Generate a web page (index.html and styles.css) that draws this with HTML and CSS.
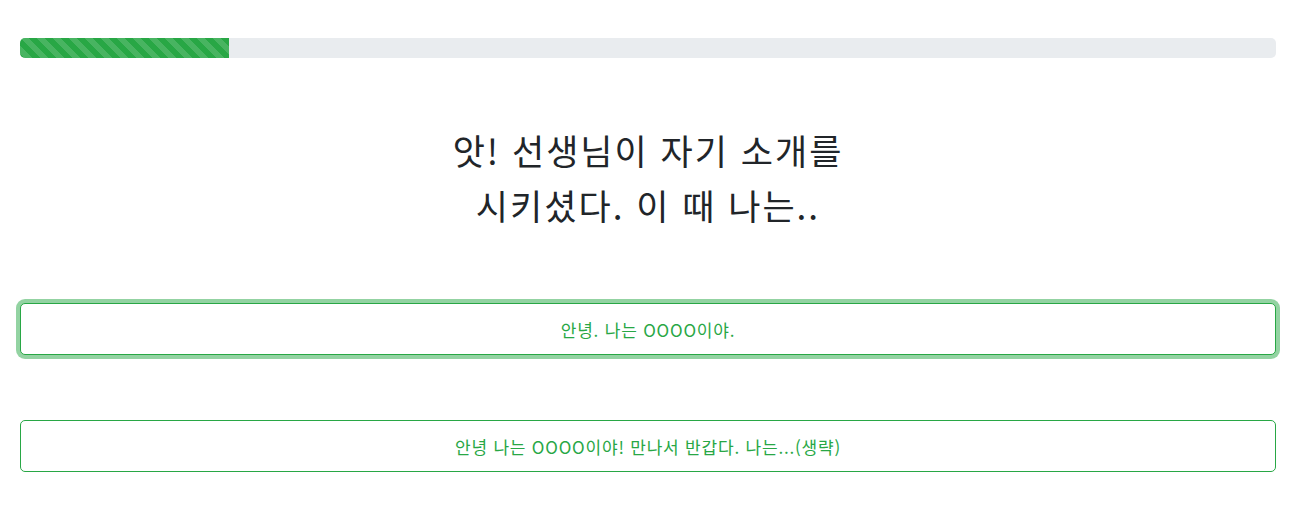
FILE: index.html
```html
<!DOCTYPE html>
<html lang="ko">
<head>
<meta charset="utf-8">
<title>Quiz</title>
<link rel="stylesheet" href="styles.css">
</head>
<body>
<div class="page">
  <div class="progress">
    <div class="progress-bar" style="width: 16.67%"></div>
  </div>
  <h2 class="question">앗! 선생님이 자기 소개를<br>시키셨다. 이 때 나는..</h2>
  <div class="answers">
    <button class="answer focused" type="button">안녕. 나는 OOOO이야.</button>
    <button class="answer" type="button">안녕 나는 OOOO이야! 만나서 반갑다. 나는...(생략)</button>
  </div>
</div>
</body>
</html>
```
FILE: styles.css
```css
html, body {
  margin: 0;
  background: #fff;
}
body {
  font-family: "Noto Sans CJK KR", "Noto Sans", sans-serif;
  color: #212529;
}
.page {
  display: flex;
  flex-direction: column;
  padding: 38px 38px 0 20px;
}
.progress {
  display: flex;
  height: 20px;
  background: #e9ecef;
  border-radius: 5px;
  overflow: hidden;
}
.progress-bar {
  background-color: #28a745;
  background-image: linear-gradient(45deg, rgba(255,255,255,.15) 25%, transparent 25%, transparent 50%, rgba(255,255,255,.15) 50%, rgba(255,255,255,.15) 75%, transparent 75%, transparent);
  background-size: 16px 16px;
}
.question {
  margin: 64px 0 0;
  text-align: center;
  font-size: 35px;
  font-weight: 400;
  letter-spacing: 2px;
  line-height: 55px;
}
.answers {
  display: flex;
  flex-direction: column;
  gap: 65px;
  margin-top: 71px;
}
.answer {
  height: 52px;
  padding: 0 12px;
  font-family: inherit;
  font-size: 17px;
  letter-spacing: 0.8px;
  color: #28a745;
  background: #fff;
  border: 1px solid #28a745;
  border-radius: 5px;
  cursor: pointer;
}
.answer.focused {
  box-shadow: 0 0 0 4px rgba(40,167,69,.5);
}
```
